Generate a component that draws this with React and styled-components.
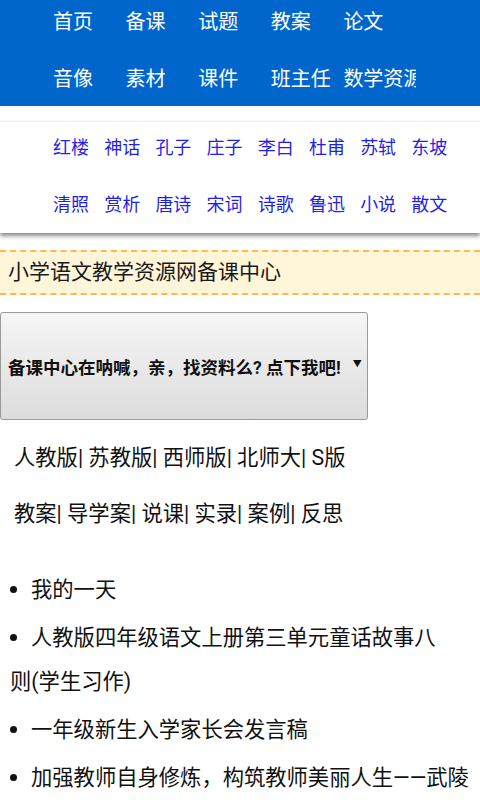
import React from "react";
import styled, { createGlobalStyle } from "styled-components";

const GlobalStyle = createGlobalStyle`
  body {
    margin: 0;
    background: #fff;
    font-family: Roboto, "Noto Sans CJK SC", sans-serif;
    color: #111;
  }
`;

const NavBar = styled.div`
  display: grid;
  grid-template-columns: repeat(5, 72.6px);
  grid-auto-rows: 44px;
  row-gap: 13px;
  padding: 0 0 5px 53px;
  background-color: #0066cc;
`;

const NavItem = styled.a`
  color: #fff;
  font-size: 20px;
  line-height: 44px;
  white-space: nowrap;
  overflow: hidden;
  text-decoration: none;
`;

const TagPanel = styled.div`
  display: grid;
  grid-template-columns: repeat(8, 51.2px);
  grid-auto-rows: 41px;
  row-gap: 16px;
  margin-top: 16px;
  padding: 5px 0 8px 53px;
  background-color: #fff;
  box-shadow: 0 3px 4px rgba(0, 0, 0, 0.45), 0 -1px 3px rgba(0, 0, 0, 0.06);
`;

const TagLink = styled.a`
  color: #1f1fe6;
  font-size: 18px;
  line-height: 41px;
  white-space: nowrap;
  text-decoration: none;
`;

const Notice = styled.div`
  margin-top: 17px;
  height: 41px;
  padding-left: 8px;
  background-color: #fff5d8;
  border-top: 2px dashed #f9bb4e;
  border-bottom: 2px dashed #f9bb4e;
  font-size: 21px;
  line-height: 41px;
  color: #1a1a1a;
`;

const PickButton = styled.div`
  display: flex;
  align-items: center;
  box-sizing: border-box;
  width: 368px;
  height: 108px;
  margin-top: 17px;
  padding: 0 10px 0 7px;
  border: 1px solid #9a9a9a;
  border-radius: 3px;
  background: linear-gradient(#f6f6f6, #dcdcdc);
  font-size: 17.5px;
  font-weight: bold;
  color: #111;
  white-space: nowrap;
`;

const Arrow = styled.span`
  margin-left: 12px;
  font-size: 9px;
  position: relative;
  top: -3px;
`;

const Edition = styled.div`
  padding-left: 14px;
  font-size: 21.3px;
  line-height: 40px;
  margin-top: ${(props) => props.$top}px;
`;

const ArticleList = styled.ul`
  list-style: none;
  margin: 34px 0 0;
  padding: 0 6px 0 10px;
`;

const ArticleItem = styled.li`
  font-size: 21.3px;
  line-height: 44px;
  margin-bottom: 4px;
`;

const Keep = styled.span`
  white-space: nowrap;
`;

const Dot = styled.span`
  display: inline-block;
  width: 7px;
  height: 7px;
  margin-right: 14px;
  border-radius: 50%;
  background: #111;
  vertical-align: middle;
  position: relative;
  top: -2px;
`;

const navs = ["首页", "备课", "试题", "教案", "论文", "音像", "素材", "课件", "班主任", "数学资源"];
const tags = ["红楼", "神话", "孔子", "庄子", "李白", "杜甫", "苏轼", "东坡", "清照", "赏析", "唐诗", "宋词", "诗歌", "鲁迅", "小说", "散文"];
const articles = [
  { title: "我的一天" },
  { title: "人教版四年级语文上册第三单元童话故事八", tail: "则(学生习作)" },
  { title: "一年级新生入学家长会发言稿" },
  { title: "加强教师自身修炼，构筑教师美丽人生——武陵" },
];

const App = () => (
  <>
    <GlobalStyle />
    <NavBar>
      {navs.map((n) => (
        <NavItem key={n}>{n}</NavItem>
      ))}
    </NavBar>
    <TagPanel>
      {tags.map((t) => (
        <TagLink key={t}>{t}</TagLink>
      ))}
    </TagPanel>
    <Notice>小学语文教学资源网备课中心</Notice>
    <PickButton>
      备课中心在呐喊，亲，找资料么? 点下我吧!
      <Arrow>▼</Arrow>
    </PickButton>
    <Edition $top={18}>人教版| 苏教版| 西师版| 北师大| S版</Edition>
    <Edition $top={16}>教案| 导学案| 说课| 实录| 案例| 反思</Edition>
    <ArticleList>
      {articles.map((a) => (
        <ArticleItem key={a.title}>
          <Dot />
          {a.title}
          {a.tail && <Keep>{a.tail}</Keep>}
        </ArticleItem>
      ))}
    </ArticleList>
  </>
);

export default App;
